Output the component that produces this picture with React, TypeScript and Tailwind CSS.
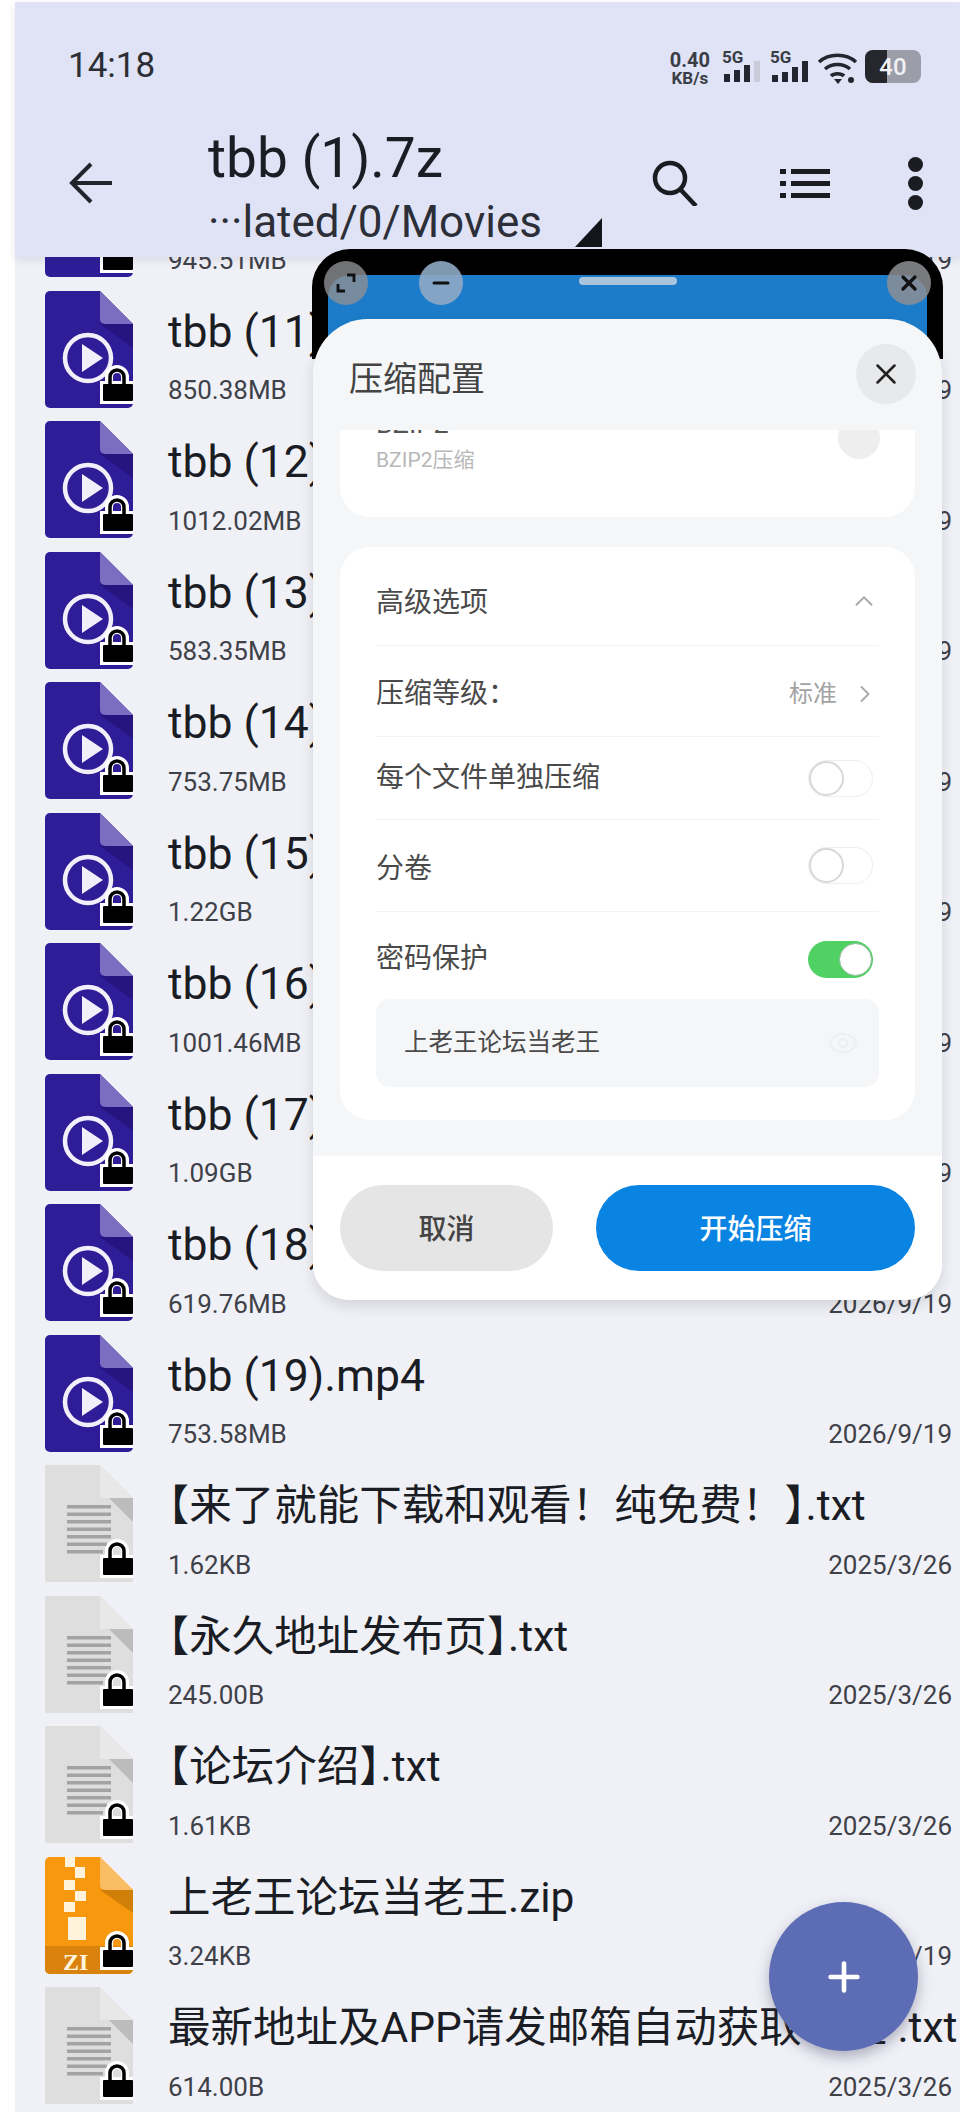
import { ChevronRight, ChevronUp, Eye, Minus, Plus, X } from 'lucide-react';

type FileKind = 'video' | 'text' | 'zip';

const files: { name: string; size: string; date: string; kind: FileKind }[] = [
  { name: 'tbb (10).mp4', size: '945.51MB', date: '2026/9/19', kind: 'video' },
  { name: 'tbb (11).mp4', size: '850.38MB', date: '2026/9/19', kind: 'video' },
  { name: 'tbb (12).mp4', size: '1012.02MB', date: '2026/9/19', kind: 'video' },
  { name: 'tbb (13).mp4', size: '583.35MB', date: '2026/9/19', kind: 'video' },
  { name: 'tbb (14).mp4', size: '753.75MB', date: '2026/9/19', kind: 'video' },
  { name: 'tbb (15).mp4', size: '1.22GB', date: '2026/9/19', kind: 'video' },
  { name: 'tbb (16).mp4', size: '1001.46MB', date: '2026/9/19', kind: 'video' },
  { name: 'tbb (17).mp4', size: '1.09GB', date: '2026/9/19', kind: 'video' },
  { name: 'tbb (18).mp4', size: '619.76MB', date: '2026/9/19', kind: 'video' },
  { name: 'tbb (19).mp4', size: '753.58MB', date: '2026/9/19', kind: 'video' },
  { name: '【来了就能下载和观看！纯免费！】.txt', size: '1.62KB', date: '2025/3/26', kind: 'text' },
  { name: '【永久地址发布页】.txt', size: '245.00B', date: '2025/3/26', kind: 'text' },
  { name: '【论坛介绍】.txt', size: '1.61KB', date: '2025/3/26', kind: 'text' },
  { name: '上老王论坛当老王.zip', size: '3.24KB', date: '2026/9/19', kind: 'zip' },
  { name: '最新地址及APP请发邮箱自动获取地址\u00a0.txt', size: '614.00B', date: '2025/3/26', kind: 'text' },
];

// brackets sit half width in the file names
function FileName({ name }: { name: string }) {
  return (
    <>
      {name.split(/([【】])/).map((part, i) =>
        part === '【' || part === '】' ? (
          <span key={i} className="[font-feature-settings:'halt']">{part}</span>
        ) : (
          <span key={i}>{part}</span>
        ),
      )}
    </>
  );
}

function LockBadge() {
  return (
    <g>
      <path d="M64 93v-7a8 8 0 0 1 16 0v7" fill="none" stroke="#fff" strokeWidth="8" />
      <rect x="55" y="90" width="33" height="23" fill="#fff" />
      <path d="M65 93v-7a7 7 0 0 1 14 0v7" fill="none" stroke="#000" strokeWidth="3.5" />
      <rect x="58" y="93" width="30" height="17" rx="1" fill="#000" />
    </g>
  );
}

function FileIcon({ kind }: { kind: FileKind }) {
  if (kind === 'video') {
    return (
      <svg width="88" height="117" viewBox="0 0 88 117" className="shrink-0">
        <path d="M5 0h50l33 33v79a5 5 0 0 1-5 5H5a5 5 0 0 1-5-5V5a5 5 0 0 1 5-5z" fill="#2f1c97" />
        <path d="M55 33h33v24z" fill="#261580" />
        <path d="M55 0l33 33H60a5 5 0 0 1-5-5z" fill="#7b6dbf" />
        <circle cx="43" cy="67" r="23" fill="none" stroke="#f1effa" strokeWidth="4.5" />
        <path d="M37 53l21 14-21 14z" fill="#f1effa" />
        <LockBadge />
      </svg>
    );
  }
  if (kind === 'text') {
    return (
      <svg width="88" height="117" viewBox="0 0 88 117" className="shrink-0">
        <path d="M2 0h53l33 33v84H2a2 2 0 0 1-2-2V2a2 2 0 0 1 2-2z" fill="#dedede" />
        <path d="M55 0l33 33H55z" fill="#e8e8e8" />
        <path d="M64 33h24v24z" fill="#bcbcbc" />
        <g fill="#a3a3a3">
          <rect x="22" y="40" width="44" height="3.5" />
          <rect x="22" y="47.5" width="44" height="3.5" />
          <rect x="22" y="55" width="44" height="3.5" />
          <rect x="22" y="62.5" width="44" height="3.5" />
          <rect x="22" y="70" width="44" height="3.5" />
          <rect x="22" y="77.5" width="40" height="3.5" />
          <rect x="22" y="85" width="36" height="3.5" />
        </g>
        <LockBadge />
      </svg>
    );
  }
  return (
    <svg width="88" height="117" viewBox="0 0 88 117" className="shrink-0">
      <path d="M5 0h50l33 33v79a5 5 0 0 1-5 5H5a5 5 0 0 1-5-5V5a5 5 0 0 1 5-5z" fill="#f7980f" />
      <path d="M55 33h33v23z" fill="#d07f08" />
      <path d="M55 0l33 33H60a5 5 0 0 1-5-5z" fill="#fbbd63" />
      <path d="M0 89h88v23a5 5 0 0 1-5 5H5a5 5 0 0 1-5-5z" fill="#d9820e" />
      <g fill="#fff3dc">
        <rect x="20" y="0" width="10" height="10" />
        <rect x="30" y="10" width="10" height="11" />
        <rect x="19" y="23" width="11" height="10" />
        <rect x="30" y="34" width="11" height="10" />
        <rect x="19" y="45" width="11" height="10" />
        <rect x="23" y="60" width="18" height="23" />
      </g>
      <text x="18" y="113" fontSize="24" fontWeight="700" fill="#fff3dc" fontFamily="'Liberation Serif', serif">ZI</text>
      <LockBadge />
    </svg>
  );
}

function Bars({ heights, faint }: { heights: number[]; faint?: number }) {
  return (
    <div className="flex items-end gap-[4px] h-[21px] -mt-[4px] pl-[2px]">
      {heights.map((h, i) => (
        <span key={i} className={i === faint ? 'w-[6px] bg-[#c9ccd8]' : 'w-[6px] bg-[#23262e]'} style={{ height: h }} />
      ))}
    </div>
  );
}

function Toggle({ on }: { on?: boolean }) {
  if (on) {
    return (
      <div className="w-[65px] h-[37px] rounded-full bg-[#4fd163] flex justify-end items-center">
        <span className="w-[33px] h-[33px] mr-[1px] rounded-full bg-white border border-[#8fb89a]" />
      </div>
    );
  }
  return (
    <div className="w-[65px] h-[37px] rounded-full bg-white border border-[#eeeeee]">
      <span className="block w-[35px] h-[35px] rounded-full bg-white border-2 border-[#d8d8d8]" />
    </div>
  );
}

function OptionRow({ label, height, labelClass, children }: { label: string; height: string; labelClass?: string; children?: React.ReactNode }) {
  return (
    <div className={`${height} flex items-center justify-between border-b border-[#f3f3f3] text-[28px] text-[#4a4a4a]`}>
      <span className={labelClass}>{label}</span>
      {children}
    </div>
  );
}

function FloatingWindow() {
  return (
    <div className="absolute z-20 left-[312px] top-[249px] w-[631px]">
      <div className="h-[110px] bg-black rounded-t-[38px] px-[16px] pt-[26px]">
        <div className="h-[84px] bg-[#1c7cc9] rounded-t-[22px] flex justify-center">
          <span className="w-[98px] h-[8px] mt-[2px] rounded-sm bg-[#a9c4dc]" />
        </div>
      </div>
      <div className="absolute left-[12px] top-[12px] w-[44px] h-[44px] rounded-full bg-[#8d8f94]/80 flex items-center justify-center">
        <svg width="24" height="24" viewBox="0 0 24 24" fill="none" stroke="#111" strokeWidth="2.8">
          <path d="M13 4h7v7M11 20H4v-7" />
        </svg>
      </div>
      <div className="absolute left-[107px] top-[12px] w-[44px] h-[44px] rounded-full bg-[#8fa9c4]/90 flex items-center justify-center">
        <Minus size={24} strokeWidth={3} color="#111" />
      </div>
      <div className="absolute left-[575px] top-[12px] w-[44px] h-[44px] rounded-full bg-[#8d8f94]/85 flex items-center justify-center">
        <X size={24} strokeWidth={3.2} color="#111" />
      </div>

      <div className="relative -mt-[40px] mx-[1px] h-[981px] bg-[#f4f6f8] rounded-t-[55px] rounded-b-[36px] overflow-hidden flex flex-col shadow-[0_6px_14px_rgba(0,0,0,0.12)]">
        <div className="h-[111px] shrink-0 pl-[36px] pr-[26px] flex items-center justify-between">
          <span className="text-[34px] text-[#444] mt-[10px]">压缩配置</span>
          <div className="w-[60px] h-[60px] rounded-full bg-[#e8e9eb] flex items-center justify-center -mt-[2px]">
            <X size={34} strokeWidth={1.8} color="#222" />
          </div>
        </div>

        <div className="h-[726px] shrink-0 px-[27px] overflow-hidden">
          <div className="-mt-[60px] h-[147px] bg-white rounded-[30px] pl-[36px] pr-[35px] pt-[39px] flex justify-between">
            <div className="flex flex-col">
              <span className="text-[27px] leading-[30px] text-[#555]">BZIP2</span>
              <span className="mt-[8px] text-[21px] leading-[26px] text-[#b8b8b8]">BZIP2压缩</span>
            </div>
            <span className="w-[42px] h-[42px] mt-[8px] rounded-full bg-[#eeeeee]" />
          </div>

          <div className="mt-[30px] h-[573px] bg-white rounded-[30px] px-[36px]">
            <OptionRow label="高级选项" height="h-[99px] pt-[10px]" labelClass="mt-[4px]">
              <ChevronUp size={30} strokeWidth={1.5} color="#aaa" />
            </OptionRow>
            <OptionRow label="压缩等级：" height="h-[91px] pt-[5px]">
              <span className="flex items-center text-[24px] text-[#a3a3a3]">
                标准
                <ChevronRight size={28} strokeWidth={1.6} color="#aaa" className="ml-[14px]" />
              </span>
            </OptionRow>
            <OptionRow label="每个文件单独压缩" height="h-[83px]">
              <span className="mr-[6px]"><Toggle /></span>
            </OptionRow>
            <OptionRow label="分卷" height="h-[92px]" labelClass="mt-[6px]">
              <span className="mr-[6px]"><Toggle /></span>
            </OptionRow>
            <div className="h-[87px] flex items-center justify-between text-[28px] text-[#4a4a4a]">
              <span className="mt-[6px]">密码保护</span>
              <span className="mr-[6px] mt-[8px]"><Toggle on /></span>
            </div>
            <div className="h-[88px] rounded-[14px] bg-[#f5f6f8] pl-[28px] pr-[20px] flex items-center justify-between text-[24.5px] text-[#4a4a4a]">
              <span>上老王论坛当老王</span>
              <Eye size={32} strokeWidth={1.4} color="#eceef0" />
            </div>
          </div>
        </div>

        <div className="flex-1 bg-white px-[27px] pt-[29px] flex justify-between">
          <div className="w-[213px] h-[86px] pt-[3px] rounded-full bg-[#e5e5e5] flex items-center justify-center text-[28px] font-medium text-[#444]">取消</div>
          <div className="w-[319px] h-[86px] pt-[3px] rounded-full bg-[#0a84e2] flex items-center justify-center text-[28px] font-medium text-white">开始压缩</div>
        </div>
      </div>
    </div>
  );
}

export default function App() {
  return (
    <div className="relative w-[960px] h-[2114px] overflow-hidden bg-white pl-[15px] py-[2px] font-[Roboto,'Noto_Sans_CJK_SC',sans-serif] text-[#1b1d24]">
      <div className="h-full bg-[#f0f1f7] flex flex-col">
        <header className="relative z-10 h-[255px] shrink-0 bg-[#dfe3f5] shadow-[0_3px_8px_rgba(60,60,90,0.12)]">
          <div className="h-[128px] pl-[53px] pr-[39px] pt-[46px] flex justify-between">
            <span className="text-[35px] leading-[36px] text-[#2c2e35]">14:18</span>
            <div className="flex items-start h-[36px] mt-[2px]">
              <div className="flex flex-col items-center font-bold text-[#3a3d46] mr-[12px]">
                <span className="text-[20px] leading-[20px]">0.40</span>
                <span className="text-[17px] leading-[16px]">KB/s</span>
              </div>
              <div className="flex flex-col mr-[10px]">
                <span className="text-[17px] leading-[15px] font-bold text-[#3a3d46]">5G</span>
                <Bars heights={[8, 12, 17, 21]} faint={3} />
              </div>
              <div className="flex flex-col mr-[9px]">
                <span className="text-[17px] leading-[15px] font-bold text-[#3a3d46]">5G</span>
                <Bars heights={[7, 10, 15, 21]} />
              </div>
              <svg width="41" height="33" viewBox="0 0 41 33" fill="none" stroke="#23262e" strokeWidth="3.6" className="mr-[7px] mt-[2px]">
                <path d="M2 10c10-9 27-9 37 0M8 17c7-6 18-6 25 0M14 24c3-3 10-3 13 0" />
                <path d="M17 27h8l-4 5z" fill="#23262e" stroke="none" />
                <circle cx="34" cy="28" r="3" fill="#23262e" stroke="none" />
              </svg>
              <div className="relative w-[56px] h-[33px] rounded-[8px] overflow-hidden bg-[#9b9da9] flex items-center justify-center">
                <span className="absolute left-0 top-0 w-[22px] h-full bg-[#26272d]" />
                <span className="relative text-[24px] font-medium text-[#f1f1f4]">40</span>
              </div>
            </div>
          </div>

          <div className="h-[122px] pl-[53px] flex items-center">
            <svg width="44" height="42" viewBox="0 0 44 42" fill="none" stroke="#22242b" strokeWidth="4" className="shrink-0 -mt-[16px]">
              <path d="M44 21H4M23 2L4 21l19 19" />
            </svg>
            <div className="w-[394px] ml-[96px] -mt-[8px] flex flex-col">
              <span className="text-[55px] leading-[56px]">tbb (1).7z</span>
              <div className="mt-[14px] flex items-end justify-between h-[44px]">
                <span className="text-[44px] leading-[44px] text-[#2c2e38]">···lated/0/Movies</span>
                <svg width="27" height="29" viewBox="0 0 27 29" className="-mb-[3px]">
                  <path d="M27 0v29H0z" fill="#14151a" />
                </svg>
              </div>
            </div>
            <svg width="46" height="46" viewBox="0 0 46 46" fill="none" stroke="#1a1c22" strokeWidth="4.5" className="ml-[50px] -mt-[17px] shrink-0">
              <circle cx="18" cy="18" r="15" />
              <path d="M28 29l16 17" />
            </svg>
            <svg width="50" height="30" viewBox="0 0 50 30" fill="#1a1c22" className="ml-[82px] -mt-[16px] shrink-0">
              <rect x="0" y="1" width="6" height="5" />
              <rect x="11" y="1" width="39" height="5" />
              <rect x="0" y="13" width="6" height="5" />
              <rect x="11" y="13" width="39" height="5" />
              <rect x="0" y="25" width="6" height="5" />
              <rect x="11" y="25" width="39" height="5" />
            </svg>
            <div className="ml-[78px] -mt-[16px] flex flex-col gap-[4px]">
              <span className="w-[15px] h-[15px] rounded-full bg-[#1a1c22]" />
              <span className="w-[15px] h-[15px] rounded-full bg-[#1a1c22]" />
              <span className="w-[15px] h-[15px] rounded-full bg-[#1a1c22]" />
            </div>
          </div>
        </header>

        <div className="flex-1 overflow-hidden">
          <div className="-mt-[103.5px]">
            {files.map((f) => (
              <div key={f.name} className="h-[130.5px] pl-[30px] pt-[6.75px] flex">
                <FileIcon kind={f.kind} />
                <div className="ml-[35px] flex-1 min-w-0 pt-[16px] pr-[8px] flex flex-col">
                  <div className={f.kind === 'video' ? 'h-[50px] text-[44.5px] leading-[50px] whitespace-nowrap' : 'h-[50px] text-[42.5px] leading-[50px] whitespace-nowrap'}>
                    <FileName name={f.name} />
                  </div>
                  <div className="mt-[16px] h-[36px] flex items-center justify-between text-[26px] text-[#3f4149]">
                    <span>{f.size}</span>
                    <span>{f.date}</span>
                  </div>
                </div>
              </div>
            ))}
          </div>
        </div>
      </div>

      <FloatingWindow />

      <div className="absolute z-20 left-[769px] top-[1902px] w-[149px] h-[149px] rounded-full bg-[#5c6db5] flex items-center justify-center shadow-[0_6px_14px_rgba(50,50,80,0.35)]">
        <Plus size={46} strokeWidth={2.4} color="#fff" />
      </div>
    </div>
  );
}
